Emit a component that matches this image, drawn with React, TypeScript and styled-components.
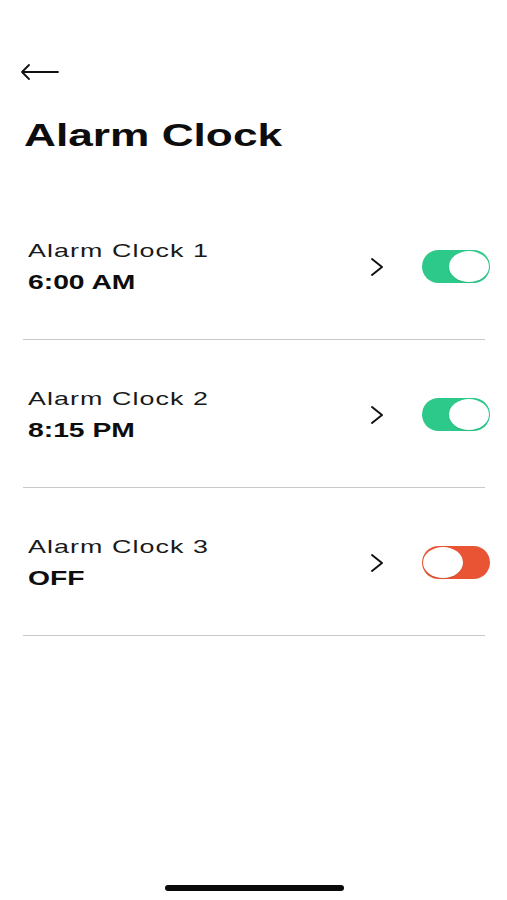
import React, { useState } from "react";
import styled, { createGlobalStyle } from "styled-components";

const GlobalStyle = createGlobalStyle`
  html, body {
    margin: 0;
    padding: 0;
    background: #ffffff;
  }
  body {
    font-family: "Liberation Sans", Arial, sans-serif;
    color: #111111;
  }
`;

const Screen = styled.div`
  position: relative;
  width: 507px;
  height: 900px;
  background: #ffffff;
  display: flex;
  flex-direction: column;
  overflow: hidden;
`;

const Header = styled.header`
  display: flex;
  flex-direction: column;
  padding: 63px 0 0 20px;
`;

const BackButton = styled.button`
  width: 40px;
  height: 18px;
  padding: 0;
  border: none;
  background: none;
  display: flex;
  align-items: center;
  cursor: pointer;
`;

const Wide = styled.span`
  display: block;
  white-space: nowrap;
  transform: scaleX(1.45);
  transform-origin: left center;
`;

const Title = styled.h1`
  margin: 37px 0 0 4px;
  font-size: 30.5px;
  line-height: 34px;
  font-weight: 700;
  color: #0d0d0d;
`;

const List = styled.ul`
  list-style: none;
  margin: 40px 22px 0 23px;
  padding: 0;
`;

const Row = styled.li`
  height: 147px;
  display: flex;
  align-items: center;
  border-bottom: 1px solid #c9c9c9;
  padding-left: 5px;
`;

const Info = styled.div`
  flex: 1;
  display: flex;
  flex-direction: column;
  gap: 11px;
  padding-top: 1px;
`;

const Name = styled.div`
  font-size: 18.5px;
  line-height: 21px;
  font-weight: 400;
  letter-spacing: 0.75px;
  color: #1a1a1a;
`;

const Time = styled.div`
  font-size: 19.5px;
  line-height: 21px;
  font-weight: 700;
  color: #0d0d0d;
`;

const Chevron = styled.button`
  width: 14px;
  height: 20px;
  padding: 0;
  border: none;
  background: none;
  margin: 3px 38px 0 0;
  display: flex;
  align-items: center;
  justify-content: center;
`;

const Track = styled.button<{ $on: boolean }>`
  position: relative;
  width: 68px;
  height: 33px;
  margin: 1px -5px 0 0;
  padding: 0;
  border: none;
  border-radius: 17px;
  background: ${(p) => (p.$on ? "#2dc98a" : "#e85434")};
  cursor: pointer;
`;

const Knob = styled.span<{ $on: boolean }>`
  position: absolute;
  top: 1px;
  left: ${(p) => (p.$on ? "27px" : "1px")};
  width: 40px;
  height: 31px;
  border-radius: 50%;
  background: #ffffff;
  box-shadow: 0 1px 2px rgba(0, 0, 0, 0.08);
`;

const HomeIndicator = styled.div`
  position: absolute;
  left: 165px;
  bottom: 9px;
  width: 179px;
  height: 6px;
  border-radius: 3px;
  background: #0a0a0a;
`;

const alarms = [
  { id: 1, name: "Alarm Clock 1", time: "6:00 AM", on: true },
  { id: 2, name: "Alarm Clock 2", time: "8:15 PM", on: true },
  { id: 3, name: "Alarm Clock 3", time: "OFF", on: false },
];

const App = () => {
  const [state, setState] = useState(alarms);

  const toggle = (id: number) =>
    setState((list) =>
      list.map((a) => (a.id === id ? { ...a, on: !a.on } : a))
    );

  return (
    <Screen>
      <GlobalStyle />
      <Header>
        <BackButton aria-label="Back">
          <svg width="40" height="18" viewBox="0 0 40 18" fill="none">
            <path
              d="M2 9H38M2 9L9 2M2 9L9 16"
              stroke="#111"
              strokeWidth="1.8"
              strokeLinecap="round"
              strokeLinejoin="round"
            />
          </svg>
        </BackButton>
        <Title>
          <Wide>Alarm Clock</Wide>
        </Title>
      </Header>
      <List>
        {state.map((a) => (
          <Row key={a.id}>
            <Info>
              <Name>
                <Wide>{a.name}</Wide>
              </Name>
              <Time>
                <Wide>{a.time}</Wide>
              </Time>
            </Info>
            <Chevron aria-label="Open">
              <svg width="14" height="20" viewBox="0 0 14 20" fill="none">
                <path
                  d="M2 2L12 10L2 18"
                  stroke="#111"
                  strokeWidth="2"
                  strokeLinecap="round"
                  strokeLinejoin="round"
                />
              </svg>
            </Chevron>
            <Track $on={a.on} onClick={() => toggle(a.id)}>
              <Knob $on={a.on} />
            </Track>
          </Row>
        ))}
      </List>
      <HomeIndicator />
    </Screen>
  );
};

export default App;
